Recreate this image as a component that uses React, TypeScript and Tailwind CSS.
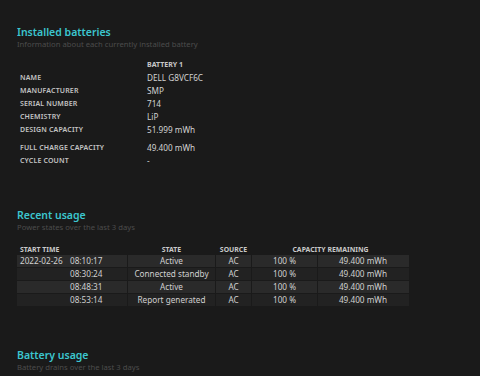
import React from 'react';

interface InfoRow {
  label: string;
  value: string;
  gapBefore?: boolean;
}

interface UsageRow {
  date?: string;
  time: string;
  state: string;
  source: string;
  percent: string;
  capacity: string;
}

const batteryInfo: InfoRow[] = [
  { label: 'NAME', value: 'DELL G8VCF6C' },
  { label: 'MANUFACTURER', value: 'SMP' },
  { label: 'SERIAL NUMBER', value: '714' },
  { label: 'CHEMISTRY', value: 'LiP' },
  { label: 'DESIGN CAPACITY', value: '51.999 mWh' },
  { label: 'FULL CHARGE CAPACITY', value: '49.400 mWh', gapBefore: true },
  { label: 'CYCLE COUNT', value: '-' },
];

const recentUsage: UsageRow[] = [
  { date: '2022-02-26', time: '08:10:17', state: 'Active', source: 'AC', percent: '100 %', capacity: '49.400 mWh' },
  { time: '08:30:24', state: 'Connected standby', source: 'AC', percent: '100 %', capacity: '49.400 mWh' },
  { time: '08:48:31', state: 'Active', source: 'AC', percent: '100 %', capacity: '49.400 mWh' },
  { time: '08:53:14', state: 'Report generated', source: 'AC', percent: '100 %', capacity: '49.400 mWh' },
];

const SectionTitle: React.FC<{ title: string; subtitle: string }> = ({ title, subtitle }) => (
  <div>
    <h2 className="text-[10.5px] font-semibold leading-[14px] text-[#3cc6cf]">{title}</h2>
    <p className="text-[7.7px] leading-[10px] text-[#4c4c4c] whitespace-nowrap">{subtitle}</p>
  </div>
);

export default function App() {
  return (
    <div
      className="w-[480px] h-[376px] overflow-hidden bg-[#1a1a1a] px-[17px] pt-[25px]"
      style={{ fontFamily: '"Noto Sans", "Open Sans", sans-serif' }}
    >
      <SectionTitle title="Installed batteries" subtitle="Information about each currently installed battery" />

      <div className="mt-[9px] pl-[3px]">
        <div className="flex h-[14px] items-center">
          <div className="w-[127px]" />
          <div className="text-[7px] font-bold text-[#c9c9c9]">BATTERY 1</div>
        </div>
        {batteryInfo.map((row) => (
          <div
            key={row.label}
            className={`flex h-[13px] items-center ${row.gapBefore ? 'mt-[5px]' : ''}`}
          >
            <div className="w-[127px] text-[7px] font-semibold text-[#c4c4c4] tracking-[0.15px]">{row.label}</div>
            <div className="text-[8.2px] text-[#d2d2d2]">{row.value}</div>
          </div>
        ))}
      </div>

      <div className="mt-[40px]">
        <SectionTitle title="Recent usage" subtitle="Power states over the last 3 days" />
      </div>

      <table className="mt-[12px] w-[391px] border-separate border-spacing-[1px] -ml-[1px] table-fixed">
        <colgroup>
          <col className="w-[110px]" />
          <col className="w-[87px]" />
          <col className="w-[35px]" />
          <col className="w-[65px]" />
          <col className="w-[91px]" />
        </colgroup>
        <thead>
          <tr className="h-[9px] text-[6.9px] leading-[9px] text-[#c9c9c9]">
            <th className="text-left pl-[3px] p-0 font-bold">START TIME</th>
            <th className="text-center p-0 font-bold">STATE</th>
            <th className="text-center p-0 font-bold">SOURCE</th>
            <th colSpan={2} className="text-center p-0 font-bold">CAPACITY REMAINING</th>
          </tr>
        </thead>
        <tbody>
          {recentUsage.map((row, idx) => {
            const bg = idx % 2 === 0 ? 'bg-[#2a2a2a]' : 'bg-[#222222]';
            return (
              <tr key={row.time} className="h-[12px] text-[8.2px] leading-[12px] text-[#d0d0d0]">
                <td className={`${bg} pl-[3px] p-0 whitespace-nowrap`}>
                  <span className="inline-block w-[50px]">{row.date ?? ''}</span>
                  <span>{row.time}</span>
                </td>
                <td className={`${bg} text-center p-0 whitespace-nowrap`}>{row.state}</td>
                <td className={`${bg} text-center p-0`}>{row.source}</td>
                <td className={`${bg} text-center p-0`}>{row.percent}</td>
                <td className={`${bg} text-right pr-[22px] p-0`}>{row.capacity}</td>
              </tr>
            );
          })}
        </tbody>
      </table>

      <div className="mt-[41px]">
        <SectionTitle title="Battery usage" subtitle="Battery drains over the last 3 days" />
      </div>
    </div>
  );
}
